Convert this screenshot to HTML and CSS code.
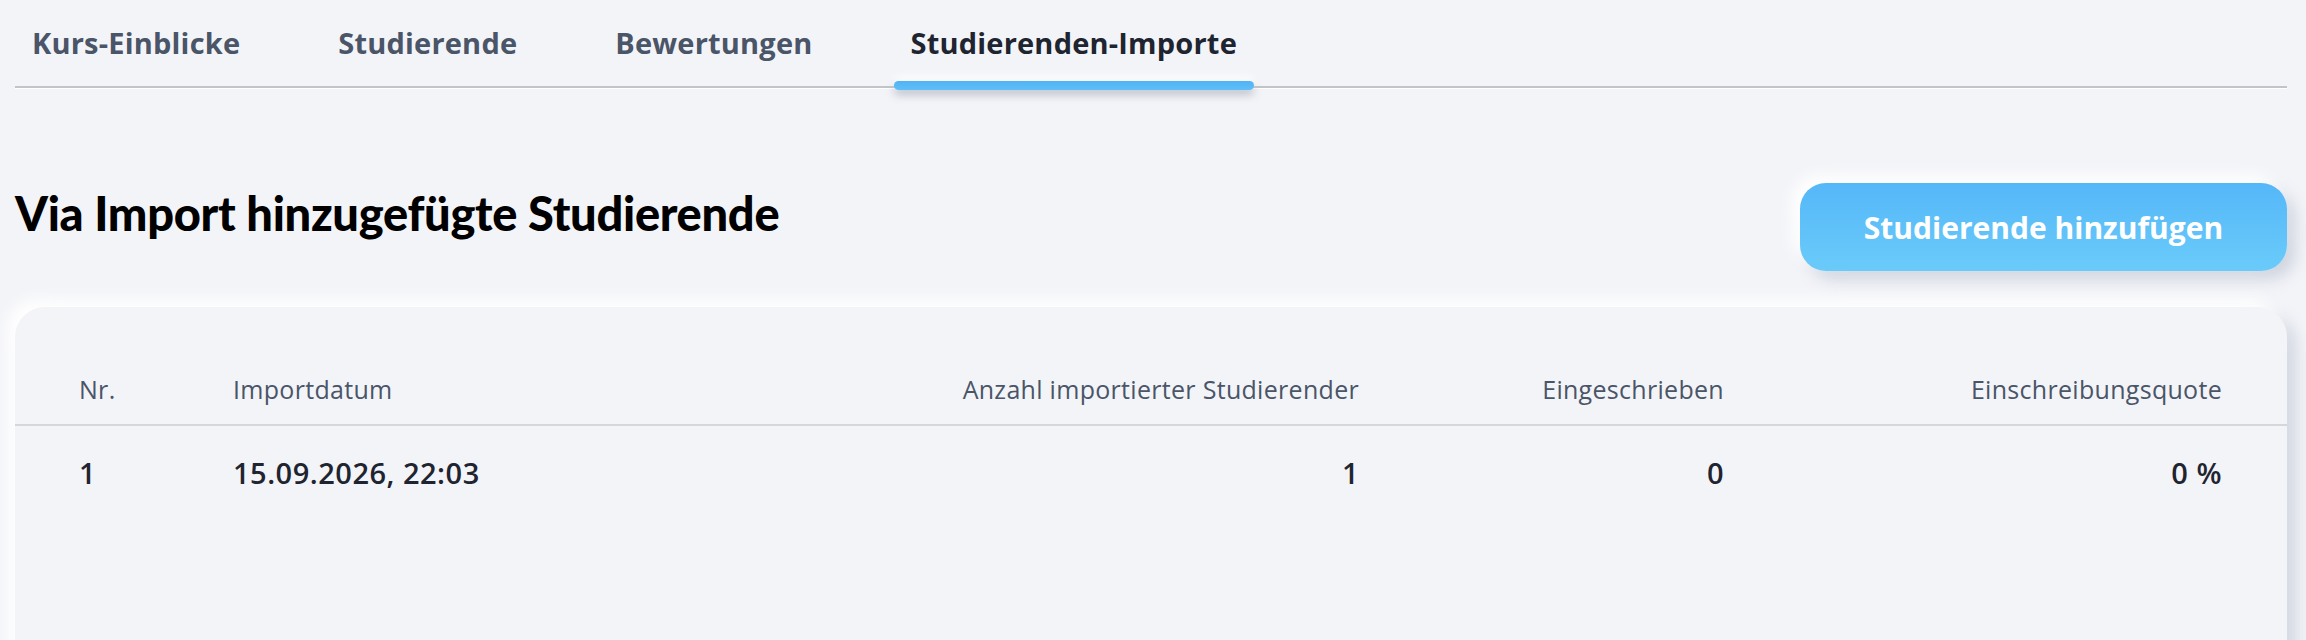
FILE: index.html
```html
<!DOCTYPE html>
<html lang="de">
<head>
<meta charset="utf-8">
<title>Studierenden-Importe</title>
<link rel="stylesheet" href="styles.css">
</head>
<body>
<div class="page">
  <nav class="tabs">
    <a class="tab">Kurs-Einblicke</a>
    <a class="tab">Studierende</a>
    <a class="tab">Bewertungen</a>
    <a class="tab active">Studierenden-Importe</a>
  </nav>

  <div class="head-row">
    <h1 class="title">Via Import hinzugefügte Studierende</h1>
    <button class="btn-primary">Studierende hinzufügen</button>
  </div>

  <section class="card">
    <div class="grid grid-head">
      <div class="cell">Nr.</div>
      <div class="cell">Importdatum</div>
      <div class="cell right">Anzahl importierter Studierender</div>
      <div class="cell right">Eingeschrieben</div>
      <div class="cell right">Einschreibungsquote</div>
    </div>
    <div class="grid grid-row">
      <div class="cell">1</div>
      <div class="cell">15.09.2026, 22:03</div>
      <div class="cell right">1</div>
      <div class="cell right">0</div>
      <div class="cell right">0 %</div>
    </div>
  </section>
</div>
</body>
</html>
```

FILE: styles.css
```css
html, body {
  margin: 0;
  padding: 0;
  background: #f3f4f8;
  overflow: hidden;
}

body {
  font-family: "Open Sans", "Noto Sans", sans-serif;
  color: #1e2430;
}

.page {
  padding: 0 19px 0 15px;
}

.tabs {
  display: flex;
  gap: 64px;
  padding-top: 25px;
  border-bottom: 2px solid #c3c4c7;
  box-shadow: 0 1px 0 #ffffff;
}

.tab {
  position: relative;
  padding: 0 17px 26px;
  font-size: 29px;
  line-height: 35px;
  font-weight: 700;
  letter-spacing: 0.2px;
  color: #4a5568;
  cursor: pointer;
}

.tab.active {
  color: #1e2430;
}

.tab.active::after {
  content: "";
  position: absolute;
  left: 0;
  right: 0;
  bottom: -4px;
  height: 9px;
  border-radius: 5px;
  background: linear-gradient(180deg, #52b2f5, #60bff8);
  box-shadow: 0 5px 9px rgba(90, 100, 120, 0.35), 0 -4px 8px #ffffff;
}

.head-row {
  display: flex;
  justify-content: space-between;
  align-items: flex-start;
  margin-top: 95px;
}

.title {
  margin: 2px 0 0;
  font-family: "Lato", "Open Sans", sans-serif;
  font-size: 47px;
  line-height: 56px;
  font-weight: 900;
  letter-spacing: -0.3px;
  color: #000000;
}

.btn-primary {
  width: 487px;
  height: 88px;
  border: none;
  border-radius: 26px;
  background: linear-gradient(180deg, #55b7f8 0%, #6acbfa 100%);
  color: #ffffff;
  font-family: inherit;
  font-size: 30px;
  font-weight: 700;
  box-shadow: -8px -8px 16px #ffffff, 8px 8px 16px rgba(160, 170, 190, 0.45);
  cursor: pointer;
}

.card {
  margin-top: 36px;
  min-height: 360px;
  border-radius: 30px 30px 0 0;
  background: #f3f4f8;
  box-shadow: -8px -8px 16px #ffffff, 8px 8px 16px rgba(160, 170, 190, 0.45);
}

.grid {
  display: grid;
  grid-template-columns: 154px 626px 500px 365px 498px;
  padding: 0 64px;
}

.grid-head {
  padding-top: 67px;
  padding-bottom: 20px;
  border-bottom: 2px solid #d5d7dc;
  font-size: 25px;
  line-height: 30px;
  font-weight: 500;
  letter-spacing: 0.3px;
  color: #4a5568;
}

.grid-row {
  padding-top: 29px;
  font-size: 29px;
  line-height: 36px;
  font-weight: 600;
  letter-spacing: 0.5px;
  color: #1e2430;
}

.cell.right {
  text-align: right;
}
```
